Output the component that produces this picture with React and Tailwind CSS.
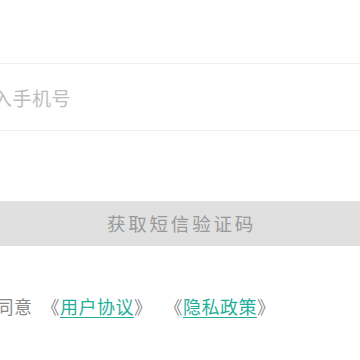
export default function App() {
  const font = { fontFamily: '"Noto Sans CJK SC", "Noto Sans", sans-serif' };
  return (
    <div className="w-[360px] h-[360px] overflow-hidden bg-white" style={font}>
      <div className="h-[64px] border-b border-[#f0f0f0]" />
      <div className="h-[67px] border-b border-[#f0f0f0] flex items-center">
        <span className="ml-[-46px] text-[19px] tracking-[0.5px] text-[#bdbdbd] leading-none">请输入手机号</span>
      </div>
      <div className="h-[70px]" />
      <div className="h-[45px] bg-[#e0e0e0] flex items-center justify-center">
        <span className="text-[18.5px] tracking-[2.8px] text-[#999999] leading-none ml-[3px]">获取短信验证码</span>
      </div>
      <div className="mt-[51px] flex items-center whitespace-nowrap text-[18px] leading-none text-[#8a8a8a] tracking-[0.5px]">
        <span className="ml-[-97px]">我已阅读并同意</span>
        <span className="ml-[9px]">《</span>
        <span className="text-[#1fb09a] underline underline-offset-[3px]">用户协议</span>
        <span>》</span>
        <span className="ml-[12px]">《</span>
        <span className="text-[#1fb09a] underline underline-offset-[3px]">隐私政策</span>
        <span>》</span>
      </div>
    </div>
  );
}
